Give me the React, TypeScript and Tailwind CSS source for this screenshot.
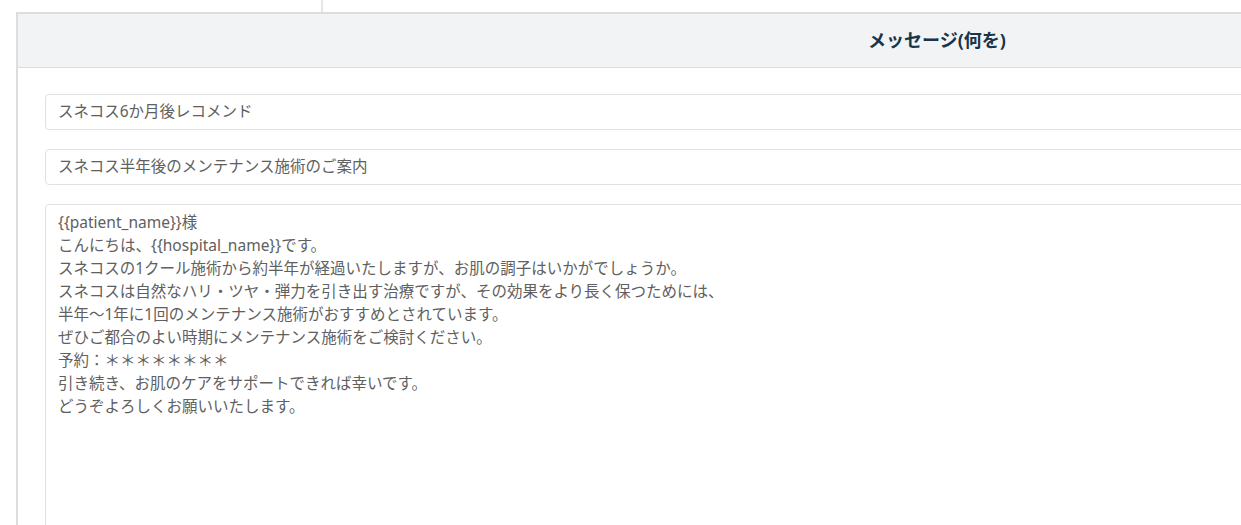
import React from "react";

const lines = [
  "{{patient_name}}様",
  "こんにちは、{{hospital_name}}です。",
  "スネコスの1クール施術から約半年が経過いたしますが、お肌の調子はいかがでしょうか。",
  "スネコスは自然なハリ・ツヤ・弾力を引き出す治療ですが、その効果をより長く保つためには、",
  "半年〜1年に1回のメンテナンス施術がおすすめとされています。",
  "ぜひご都合のよい時期にメンテナンス施術をご検討ください。",
  "予約：＊＊＊＊＊＊＊＊",
  "引き続き、お肌のケアをサポートできれば幸いです。",
  "どうぞよろしくお願いいたします。",
];

export default function App() {
  const font = { fontFamily: '"Noto Sans", "Noto Sans CJK JP", sans-serif' };
  return (
    <div className="w-[1241px] h-[525px] overflow-hidden bg-white" style={font}>
      <div className="flex h-[12px]">
        <div className="w-[323px] border-r-2 border-[#e6e6e6]" />
      </div>
      <div className="ml-[16px] w-[1840px] h-[600px] border-t-2 border-l-2 border-[#dddddd] bg-white">
        <div className="h-[54px] bg-[#f2f3f5] border-b border-[#d9dde1] flex items-center justify-center">
          <span className="text-[18px] font-bold text-[#193549]">メッセージ(何を)</span>
        </div>
        <div className="pl-[27px] pt-[26px] flex flex-col gap-[19px]">
          <div className="h-[36px] border border-[#dee2e6] rounded-[4px] flex items-center px-[12px] text-[15.5px] text-[#606060]">
            スネコス6か月後レコメンド
          </div>
          <div className="h-[36px] border border-[#dee2e6] rounded-[4px] flex items-center px-[12px] text-[15.5px] text-[#606060]">
            スネコス半年後のメンテナンス施術のご案内
          </div>
          <div className="h-[400px] border border-[#dee2e6] rounded-[4px] px-[12px] pt-[6px] text-[15.5px] leading-[23px] text-[#606060]">
            {lines.map((l, i) => (
              <div key={i}>{l}</div>
            ))}
          </div>
        </div>
      </div>
    </div>
  );
}
